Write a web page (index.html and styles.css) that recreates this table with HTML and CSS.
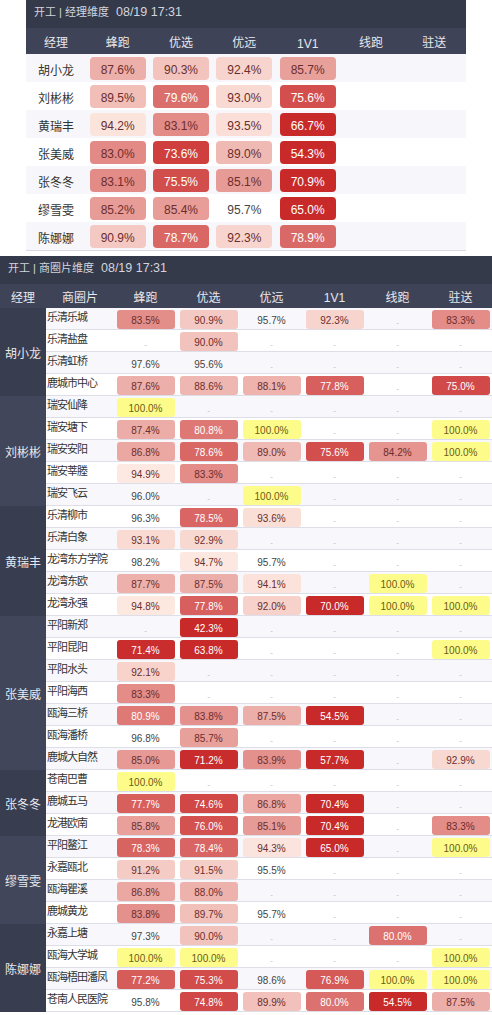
FILE: index.html
```html
<!DOCTYPE html>
<html lang="zh-CN">
<head>
    <meta charset="UTF-8">
    <meta name="viewport" content="width=device-width, initial-scale=1.0">
    <title>开工 - 经理维度 / 商圈片维度</title>
    <link rel="stylesheet" href="styles.css">
</head>
<body>
    <div class="board board-manager">
        <div class="board-title">开工 | 经理维度<span class="stamp">08/19 17:31</span></div>
        <table class="grid grid-manager">
            <colgroup>
                <col class="col-mgr">
                <col span="6">
            </colgroup>
            <thead>
                <tr>
                    <th>经理</th>
                    <th>蜂跑</th>
                    <th>优选</th>
                    <th>优远</th>
                    <th class="latin">1V1</th>
                    <th>线跑</th>
                    <th>驻送</th>
                </tr>
            </thead>
            <tbody id="managerBody"></tbody>
        </table>
    </div>

    <div class="board board-zone">
        <div class="board-title">开工 | 商圈片维度<span class="stamp">08/19 17:31</span></div>
        <table class="grid grid-zone">
            <colgroup>
                <col class="col-mgr">
                <col class="col-zone">
                <col span="6">
            </colgroup>
            <thead>
                <tr>
                    <th>经理</th>
                    <th>商圈片</th>
                    <th>蜂跑</th>
                    <th>优选</th>
                    <th>优远</th>
                    <th class="latin">1V1</th>
                    <th>线跑</th>
                    <th>驻送</th>
                </tr>
            </thead>
            <tbody id="zoneBody"></tbody>
        </table>
    </div>

    <script>
        // columns: 蜂跑, 优选, 优远, 1V1, 线跑, 驻送 (null = no data)
        const managers = [
            ['胡小龙', [87.6, 90.3, 92.4, 85.7, null, null]],
            ['刘彬彬', [89.5, 79.6, 93.0, 75.6, null, null]],
            ['黄瑞丰', [94.2, 83.1, 93.5, 66.7, null, null]],
            ['张美威', [83.0, 73.6, 89.0, 54.3, null, null]],
            ['张冬冬', [83.1, 75.5, 85.1, 70.9, null, null]],
            ['缪雪雯', [85.2, 85.4, 95.7, 65.0, null, null]],
            ['陈娜娜', [90.9, 78.7, 92.3, 78.9, null, null]]
        ];

        const zones = [
            ['胡小龙', [
                ['乐清乐城', [83.5, 90.9, 95.7, 92.3, null, 83.3]],
                ['乐清盐盘', [null, 90.0, null, null, null, null]],
                ['乐清虹桥', [97.6, 95.6, null, null, null, null]],
                ['鹿城市中心', [87.6, 88.6, 88.1, 77.8, null, 75.0]]
            ]],
            ['刘彬彬', [
                ['瑞安仙降', [100.0, null, null, null, null, null]],
                ['瑞安塘下', [87.4, 80.8, 100.0, null, null, 100.0]],
                ['瑞安安阳', [86.8, 78.6, 89.0, 75.6, 84.2, 100.0]],
                ['瑞安莘塍', [94.9, 83.3, null, null, null, null]],
                ['瑞安飞云', [96.0, null, 100.0, null, null, null]]
            ]],
            ['黄瑞丰', [
                ['乐清柳市', [96.3, 78.5, 93.6, null, null, null]],
                ['乐清白象', [93.1, 92.9, null, null, null, null]],
                ['龙湾东方学院', [98.2, 94.7, 95.7, null, null, null]],
                ['龙湾东欧', [87.7, 87.5, 94.1, null, 100.0, null]],
                ['龙湾永强', [94.8, 77.8, 92.0, 70.0, 100.0, 100.0]]
            ]],
            ['张美威', [
                ['平阳新郑', [null, 42.3, null, null, null, null]],
                ['平阳昆阳', [71.4, 63.8, null, null, null, 100.0]],
                ['平阳水头', [92.1, null, null, null, null, null]],
                ['平阳海西', [83.3, null, null, null, null, null]],
                ['瓯海三桥', [80.9, 83.8, 87.5, 54.5, null, null]],
                ['瓯海潘桥', [96.8, 85.7, null, null, null, null]],
                ['鹿城大自然', [85.0, 71.2, 83.9, 57.7, null, 92.9]]
            ]],
            ['张冬冬', [
                ['苍南巴曹', [100.0, null, null, null, null, null]],
                ['鹿城五马', [77.7, 74.6, 86.8, 70.4, null, null]],
                ['龙港欧南', [85.8, 76.0, 85.1, 70.4, null, 83.3]]
            ]],
            ['缪雪雯', [
                ['平阳鳌江', [78.3, 78.4, 94.3, 65.0, null, 100.0]],
                ['永嘉瓯北', [91.2, 91.5, 95.5, null, null, null]],
                ['瓯海瞿溪', [86.8, 88.0, null, null, null, null]],
                ['鹿城黄龙', [83.8, 89.7, 95.7, null, null, null]]
            ]],
            ['陈娜娜', [
                ['永嘉上塘', [97.3, 90.0, null, null, 80.0, null]],
                ['瓯海大学城', [100.0, 100.0, null, null, null, 100.0]],
                ['瓯海梧田潘凤', [77.2, 75.3, 98.6, 76.9, 100.0, 100.0]],
                ['苍南人民医院', [95.8, 74.8, 89.9, 80.0, 54.5, 87.5]]
            ]]
        ];

        // deep red at 71% and below, pale pink at 95%
        function rateColor(v) {
            const t = Math.min(Math.max((v - 71) / 24, 0), 1);
            const from = [200, 42, 42];
            const to = [253, 234, 226];
            const c = from.map((a, i) => Math.round(a + (to[i] - a) * t));
            return 'rgb(' + c.join(',') + ')';
        }

        function rateCell(v, dash) {
            if (v == null) {
                return dash ? '<td><span class="dash">-</span></td>' : '<td></td>';
            }
            let cls = 'rate';
            let style = '';
            if (v >= 100) {
                cls += ' rate-full';
            } else if (v < 95) {
                cls += v < 82 ? ' rate-low' : ' rate-mid';
                style = ' style="background:' + rateColor(v) + '"';
            }
            return '<td><span class="' + cls + '"' + style + '>' + v.toFixed(1) + '%</span></td>';
        }

        let html = '';
        managers.forEach(([name, vals]) => {
            html += '<tr><td class="name">' + name + '</td>';
            vals.forEach(v => { html += rateCell(v, false); });
            html += '</tr>';
        });
        document.getElementById('managerBody').innerHTML = html;

        html = '';
        zones.forEach(([name, list], g) => {
            list.forEach(([zone, vals], i) => {
                html += '<tr>';
                if (i === 0) {
                    html += '<td class="mgr' + (g % 2 ? ' mgr-alt' : '') + '" rowspan="' + list.length + '">' + name + '</td>';
                }
                html += '<td class="zone"><div class="zone-name">' + zone + '</div></td>';
                vals.forEach(v => { html += rateCell(v, true); });
                html += '</tr>';
            });
        });
        document.getElementById('zoneBody').innerHTML = html;
    </script>
</body>
</html>
```

FILE: styles.css
```css
* {
    margin: 0;
    padding: 0;
    box-sizing: border-box;
}

body {
    font-family: "Liberation Sans", "Noto Sans CJK SC", sans-serif;
    background-color: #fff;
    color: #444;
}

.board-manager {
    width: 440px;
    margin: 0 auto 5px;
    border-bottom: 1px solid #dadae3;
}

.board-title {
    height: 28px;
    line-height: 25px;
    padding-left: 8px;
    background-color: #353a4b;
    color: #d2d5dd;
    font-size: 11px;
}

.stamp {
    margin-left: 7px;
    font-size: 12.5px;
}

.grid {
    width: 100%;
    border-collapse: collapse;
    table-layout: fixed;
}

.grid th {
    background-color: #3e4357;
    color: #e6e8ee;
    font-weight: normal;
    font-size: 12px;
    text-align: center;
    vertical-align: middle;
}

.grid td {
    padding: 0;
    text-align: center;
    vertical-align: top;
}

/* 经理维度 */

.grid-manager .col-mgr {
    width: 60px;
}

.grid-manager thead tr {
    height: 26px;
}

.grid-manager th.latin {
    padding-top: 6px;
}

.grid-manager tbody tr {
    height: 28px;
}

.grid-manager tbody tr:nth-child(odd) {
    background-color: #f7f7fb;
}

.grid-manager .name {
    vertical-align: middle;
    padding-top: 2px;
    font-size: 12px;
    color: #333;
}

.grid-manager .rate {
    width: 56px;
    height: 23px;
    margin: 3px auto 0;
    line-height: 27px;
    font-size: 12px;
    border-radius: 4px;
}

/* 商圈片维度 */

.grid-zone .col-mgr {
    width: 46px;
}

.grid-zone .col-zone {
    width: 68px;
}

.grid-zone thead tr {
    height: 24px;
}

.grid-zone th.latin {
    padding-top: 4px;
}

.grid-zone tbody tr {
    height: 22px;
}

.grid-zone tbody tr:nth-child(odd) {
    background-color: #f8f8fc;
}

.grid-zone td {
    box-shadow: inset 0 -1px 0 #dedee8;
}

.grid-zone td.mgr {
    box-shadow: none;
    vertical-align: middle;
    background-color: #383d50;
    color: #e6e8ee;
    font-size: 12px;
}

.grid-zone td.mgr-alt {
    background-color: #41465a;
}

.grid-zone .zone {
    text-align: left;
    padding-left: 1px;
}

.zone-name {
    height: 19px;
    line-height: 19px;
    font-size: 11px;
    letter-spacing: -1px;
    color: #333;
    white-space: nowrap;
}

.grid-zone .rate {
    width: 58px;
    height: 19px;
    margin: 2px auto 0;
    line-height: 21px;
    font-size: 10px;
    border-radius: 3px;
}

.grid-zone .dash {
    display: block;
    height: 19px;
    line-height: 30px;
    font-size: 8px;
    color: #b8b8c4;
}

/* rate badges */

.rate {
    display: block;
    color: #444;
}

.rate-mid {
    color: #6b2d2d;
}

.rate-low {
    color: #fff;
}

.rate-full {
    background-color: #fdfc8a;
    color: #6b5b14;
}
```
